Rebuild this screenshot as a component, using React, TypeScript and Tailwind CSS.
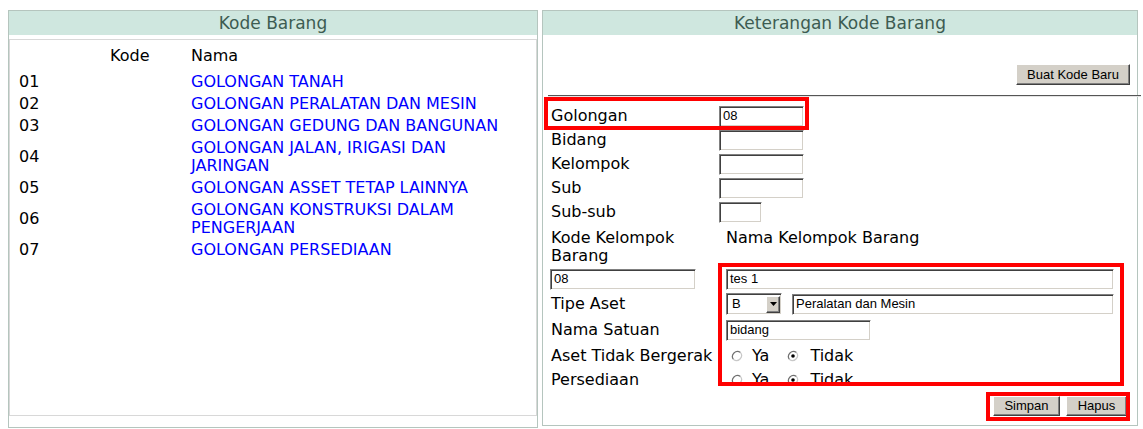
import React from 'react';

const rows = [
  { kode: '01', nama: 'GOLONGAN TANAH' },
  { kode: '02', nama: 'GOLONGAN PERALATAN DAN MESIN' },
  { kode: '03', nama: 'GOLONGAN GEDUNG DAN BANGUNAN' },
  { kode: '04', nama: 'GOLONGAN JALAN, IRIGASI DAN JARINGAN' },
  { kode: '05', nama: 'GOLONGAN ASSET TETAP LAINNYA' },
  { kode: '06', nama: 'GOLONGAN KONSTRUKSI DALAM PENGERJAAN' },
  { kode: '07', nama: 'GOLONGAN PERSEDIAAN' },
];

const inset =
  'bg-white border border-t-[#808080] border-l-[#808080] border-b-white border-r-white shadow-[inset_1px_1px_0_#404040,inset_-1px_-1px_0_#d4d0c8]';
const outset =
  'bg-[#d4d0c8] border border-t-white border-l-white border-b-[#404040] border-r-[#404040] shadow-[inset_-1px_-1px_0_#808080]';

function Field({ value = '', className = '' }: { value?: string; className?: string }) {
  return (
    <div
      className={`${inset} h-[21px] flex items-center pl-[3px] text-[13px] text-black font-['Liberation_Sans',Arial,sans-serif] ${className}`}
    >
      {value}
    </div>
  );
}

function Radio({ checked }: { checked?: boolean }) {
  return (
    <svg width="12" height="12" viewBox="0 0 12 12" className="shrink-0">
      <circle cx="6" cy="6" r="5" fill="white" />
      <path d="M9.5 2.5A5 5 0 0 0 2.5 9.5" stroke="#707070" strokeWidth="1.2" fill="none" />
      <path d="M2.5 9.5A5 5 0 0 0 9.5 2.5" stroke="#c8c8c8" strokeWidth="1.2" fill="none" />
      {checked && <circle cx="6" cy="6" r="1.8" fill="#000" />}
    </svg>
  );
}

function RadioPair() {
  return (
    <div className="flex items-center">
      <span className="ml-[5px] flex"><Radio /></span>
      <span className="ml-[9px]">Ya</span>
      <span className="ml-[18px] flex"><Radio checked /></span>
      <span className="ml-[11px]">Tidak</span>
    </div>
  );
}

function Btn({ label, className = '' }: { label: string; className?: string }) {
  return (
    <div
      className={`${outset} h-[20px] flex items-center justify-center text-[13px] text-black font-['Liberation_Sans',Arial,sans-serif] ${className}`}
    >
      {label}
    </div>
  );
}

function PanelHeader({ title }: { title: string }) {
  return (
    <div className="h-[24px] bg-[#cfe7df] text-center text-[17px] leading-[24px] text-[#3d5c52]">
      {title}
    </div>
  );
}

export default function App() {
  return (
    <div className="w-[1143px] h-[429px] bg-white font-['DejaVu_Sans',Verdana,sans-serif] text-[16px] text-black">
      <div className="flex items-start pt-[10px] pl-[8px] gap-[4px]">

        {/* Kode Barang */}
        <div className="w-[530px] h-[418px] border border-[#b5c5be] flex flex-col">
          <PanelHeader title="Kode Barang" />
          <div className="h-[4px]" />
          <div className="flex-1 border border-[#d8d8d8] pl-[9px] pt-[7px] leading-[18px]">
            <div className="grid grid-cols-[172px_325px] pb-[6px]">
              <div className="pl-[91px]">Kode</div>
              <div>Nama</div>
            </div>
            {rows.map((r) => (
              <div key={r.kode} className="grid grid-cols-[172px_325px] items-center py-[2px]">
                <div>{r.kode}</div>
                <a className="text-[#0000ff]">{r.nama}</a>
              </div>
            ))}
          </div>
          <div className="h-[11px]" />
        </div>

        {/* Keterangan Kode Barang */}
        <div className="relative w-[596px] h-[416px] border border-[#b5c5be] flex flex-col">
          <PanelHeader title="Keterangan Kode Barang" />
          <div className="h-[60px] flex justify-end pt-[29px] pr-[7px]">
            <Btn label="Buat Kode Baru" className="w-[114px] h-[21px]" />
          </div>
          <div className="h-[2px] ml-[5px] -mr-[4px] border-t border-[#555] border-b border-b-[#e4e4e4]" />

          <div className="pl-[8px] pt-[7px]">
            {[
              ['Golongan', '08', 'w-[85px]'],
              ['Bidang', '', 'w-[85px]'],
              ['Kelompok', '', 'w-[85px]'],
              ['Sub', '', 'w-[85px]'],
              ['Sub-sub', '', 'w-[43px]'],
            ].map(([label, value, w]) => (
              <div key={label} className="h-6 flex items-center">
                <div className="w-[168px]">{label}</div>
                <Field value={value} className={w} />
              </div>
            ))}

            <div className="flex pt-[5px] leading-[18px]">
              <div className="w-[175px]">Kode Kelompok Barang</div>
              <div>Nama Kelompok Barang</div>
            </div>

            <div className="mt-[2px] h-6 flex items-center">
              <div className="w-[175px]">
                <Field value="08" className="w-[146px] -ml-[1px]" />
              </div>
              <Field value="tes 1" className="w-[388px]" />
            </div>
            <div className="h-[26px] flex items-center">
              <div className="w-[175px]">Tipe Aset</div>
              <div className={`${inset} w-[56px] h-[22px] flex items-center text-[13px] font-['Liberation_Sans',Arial,sans-serif]`}>
                <span className="flex-1 pl-[5px]">B</span>
                <div className={`${outset} w-[14px] h-[17px] mr-[1px] flex items-center justify-center`}>
                  <svg width="7" height="4" viewBox="0 0 7 4">
                    <path d="M0 0h7L3.5 4z" fill="#000" />
                  </svg>
                </div>
              </div>
              <Field value="Peralatan dan Mesin" className="w-[322px] ml-[10px]" />
            </div>
            <div className="h-[26px] flex items-center">
              <div className="w-[175px]">Nama Satuan</div>
              <Field value="bidang" className="w-[145px]" />
            </div>
            <div className="h-[25px] flex items-center">
              <div className="w-[175px] whitespace-nowrap">Aset Tidak Bergerak</div>
              <RadioPair />
            </div>
            <div className="h-6 flex items-center">
              <div className="w-[175px]">Persediaan</div>
              <RadioPair />
            </div>
          </div>

          <div className="mt-[4px] flex justify-end gap-[6px] pr-[10px]">
            <Btn label="Simpan" className="w-[67px]" />
            <Btn label="Hapus" className="w-[61px]" />
          </div>

          {/* red highlight marks drawn over the form */}
          <div className="absolute left-[1px] top-[86px] w-[265px] h-[33px] border-4 border-[#ff0000] pointer-events-none" />
          <div className="absolute left-[175px] top-[252px] w-[406px] h-[123px] border-4 border-[#ff0000] pointer-events-none" />
          <div className="absolute left-[443px] top-[381px] w-[144px] h-[29px] border-4 border-[#ff0000] pointer-events-none" />
        </div>
      </div>
    </div>
  );
}
